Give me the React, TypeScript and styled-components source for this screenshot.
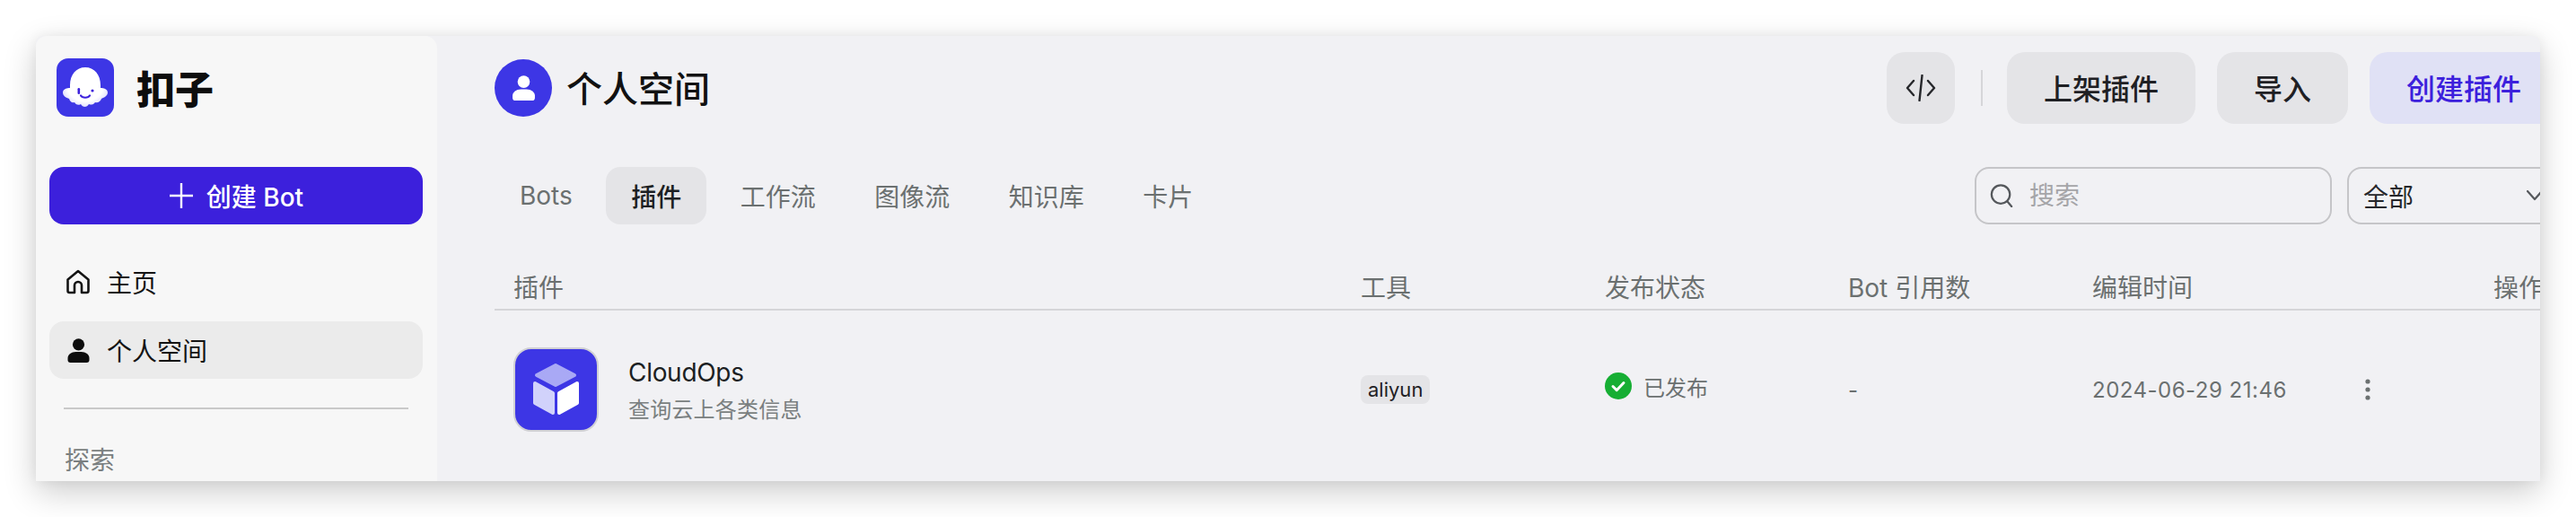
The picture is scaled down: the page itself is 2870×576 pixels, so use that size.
import { createGlobalStyle, styled } from "styled-components";

const GlobalStyle = createGlobalStyle`
  html, body {
    margin: 0;
    padding: 0;
    background: #fff;
  }
  body {
    font-family: Inter, "Noto Sans CJK SC", sans-serif;
    -webkit-font-smoothing: antialiased;
    overflow: hidden;
  }
`;

const Page = styled.div`
  width: 2870px;
  height: 576px;
  padding: 40px 40px 40px 40px;
  box-sizing: border-box;
  overflow: hidden;
`;

const Window = styled.div`
  display: flex;
  width: 2790px;
  height: 496px;
  overflow: hidden;
  background: #f1f1f4;
  border-radius: 8px 8px 0 0;
  box-shadow: 0 12px 36px rgba(0, 0, 0, 0.2), 0 0 14px rgba(0, 0, 0, 0.05);
`;

const Sidebar = styled.aside`
  flex: 0 0 447px;
  box-sizing: border-box;
  padding: 25px 16px 0 15px;
  background: #f7f7f7;
  border-radius: 12px 14px 0 0;
`;

const Brand = styled.div`
  display: flex;
  align-items: center;
  gap: 25px;
  padding-left: 8px;
  height: 65px;
`;

const BrandName = styled.span`
  font-family: "Noto Sans CJK SC", sans-serif;
  font-size: 43px;
  font-weight: 900;
  line-height: 1;
  color: #0d0d0d;
`;

const CreateBot = styled.button`
  display: flex;
  align-items: center;
  justify-content: center;
  gap: 14px;
  width: 416px;
  height: 64px;
  margin-top: 56px;
  padding: 0;
  border: 0;
  border-radius: 16px;
  background: #3c20dc;
  color: #fff;
  font: 500 28px Inter, "Noto Sans CJK SC", sans-serif;
`;

const Nav = styled.nav`
  display: flex;
  flex-direction: column;
  gap: 12px;
  margin-top: 32px;
`;

const NavItem = styled.div<{ $active?: boolean }>`
  display: flex;
  align-items: center;
  gap: 18px;
  width: 416px;
  height: 64px;
  padding-left: 18px;
  box-sizing: border-box;
  border-radius: 16px;
  background: ${(p) => (p.$active ? "#ebebeb" : "transparent")};
  color: #141414;
  font-size: 28px;
`;

const NavIconSlot = styled.span`
  display: flex;
  justify-content: center;
  width: 28px;
`;

const SideDivider = styled.div`
  width: 384px;
  height: 2px;
  margin: 32px 0 0 16px;
  background: #c9c9c9;
`;

const SideLabel = styled.div`
  margin: 36px 0 0 17px;
  font-size: 28px;
  line-height: 42px;
  color: #7a7f80;
`;

const Main = styled.main`
  flex: 0 0 2299px;
  padding: 18px 0 0 64px;
`;

const Header = styled.header`
  display: flex;
  align-items: center;
  justify-content: space-between;
  height: 80px;
`;

const Title = styled.div`
  display: flex;
  align-items: center;
  gap: 16px;
  font-size: 40px;
  font-weight: 500;
  color: #111;
`;

const TitleText = styled.span`
  margin-bottom: 3px;
`;

const Avatar = styled.span`
  display: flex;
  align-items: center;
  justify-content: center;
  width: 64px;
  height: 64px;
  border-radius: 50%;
  background: #3d36e5;
`;

const Actions = styled.div`
  display: flex;
  align-items: center;
`;

const ActionButton = styled.button<{ $primary?: boolean }>`
  height: 80px;
  padding: 0 41px 2px;
  margin-left: 24px;
  border: 0;
  border-radius: 20px;
  background: ${(p) => (p.$primary ? "#e0e1f5" : "#e4e4e7")};
  color: ${(p) => (p.$primary ? "#3c20dc" : "#1f2024")};
  font: 500 32px "Noto Sans CJK SC", sans-serif;
  white-space: nowrap;
`;

const CodeButton = styled(ActionButton)`
  display: flex;
  align-items: center;
  justify-content: center;
  width: 76px;
  padding: 0;
  margin: 0;
`;

const ActionDivider = styled.span`
  width: 2px;
  height: 40px;
  margin-left: 29px;
  margin-right: 3px;
  background: #d6d6d9;
`;

const Toolbar = styled.div`
  display: flex;
  align-items: center;
  height: 64px;
  margin-top: 48px;
`;

const Tabs = styled.div`
  display: flex;
  gap: 9.5px;
`;

const Tab = styled.div<{ $active?: boolean }>`
  display: flex;
  align-items: center;
  height: 64px;
  padding: 0 28px;
  border-radius: 16px;
  background: ${(p) => (p.$active ? "#e4e4e7" : "transparent")};
  color: ${(p) => (p.$active ? "#1c1f23" : "#6b7070")};
  font-size: 28px;
  font-weight: ${(p) => (p.$active ? 500 : 400)};
`;

const Filters = styled.div`
  display: flex;
  gap: 17px;
  margin-left: auto;
`;

const SearchBox = styled.label`
  display: flex;
  align-items: center;
  gap: 18px;
  width: 398px;
  height: 64px;
  padding-left: 15px;
  box-sizing: border-box;
  border: 2px solid #c5c5c8;
  border-radius: 16px;
`;

const SearchInput = styled.input`
  flex: 1;
  min-width: 0;
  border: 0;
  padding: 0;
  outline: 0;
  background: transparent;
  font: 28px Inter, "Noto Sans CJK SC", sans-serif;
  &::placeholder {
    color: #a5a5a8;
    opacity: 1;
  }
`;

const Select = styled.div`
  display: flex;
  align-items: center;
  justify-content: space-between;
  width: 235px;
  height: 64px;
  padding: 0 15px 0 16px;
  box-sizing: border-box;
  border: 2px solid #c5c5c8;
  border-radius: 16px;
  color: #26272b;
  font-size: 28px;
`;

const columns = "965px 272px 271px 272px 447px 1fr";

const TableHead = styled.div`
  display: grid;
  grid-template-columns: ${columns};
  align-items: center;
  height: 96px;
  padding-top: 48px;
  box-sizing: border-box;
  border-bottom: 2px solid #d5d5d8;
  color: #6b7070;
  font-size: 28px;
  line-height: 42px;
`;

const HeadCell = styled.div<{ $first?: boolean }>`
  padding-left: ${(p) => (p.$first ? "21px" : "0")};
  white-space: nowrap;
`;

const TableRow = styled.div`
  display: grid;
  grid-template-columns: ${columns};
  align-items: center;
  padding-top: 41px;
`;

const PluginCell = styled.div`
  display: flex;
  align-items: center;
  gap: 33px;
  padding-left: 21px;
`;

const PluginIcon = styled.span`
  display: block;
  width: 95px;
  height: 94px;
  box-sizing: border-box;
  border: 2px solid #d0d0d4;
  border-radius: 20px;
  background: #3d36e5;
  overflow: hidden;
`;

const PluginText = styled.div`
  display: flex;
  flex-direction: column;
  gap: 8px;
  padding-top: 4px;
`;

const PluginName = styled.div`
  font-size: 28px;
  line-height: 34px;
  letter-spacing: -0.3px;
  color: #1c1f23;
`;

const PluginDesc = styled.div`
  font-size: 24px;
  line-height: 34px;
  letter-spacing: 0.2px;
  color: #7a7f80;
`;

const Tag = styled.span`
  justify-self: start;
  height: 32px;
  padding: 0 8px;
  border-radius: 8px;
  background: #e4e4e7;
  color: #1f2024;
  font-size: 22px;
  line-height: 32px;
`;

const Status = styled.div`
  display: flex;
  align-items: center;
  gap: 13px;
  margin-bottom: 8px;
  font-size: 24px;
  color: #6b7070;
`;

const Muted = styled.div`
  font-size: 24px;
  letter-spacing: 0.5px;
  color: #6b7070;
`;

const TimeCell = styled.div`
  display: flex;
  align-items: center;
  justify-content: space-between;
  width: 310px;
`;

const PersonIcon = ({ color, width, height }: { color: string; width: number; height: number }) => (
  <svg width={width} height={height} viewBox="0 0 24 27" fill={color}>
    <circle cx="12" cy="6.8" r="6.6" />
    <path d="M0 22c0-4 4-7 9-7h6c5 0 9 3 9 7v2a3 3 0 0 1-3 3H3a3 3 0 0 1-3-3z" />
  </svg>
);

const LogoIcon = () => (
  <svg width="64" height="65" viewBox="0 0 64 65">
    <defs>
      <radialGradient id="ghost" cx="50%" cy="45%" r="58%">
        <stop offset="70%" stopColor="#fff" />
        <stop offset="100%" stopColor="#dcdafc" />
      </radialGradient>
    </defs>
    <rect width="64" height="65" rx="13" fill="#3d36e5" />
    <path
      fill="url(#ghost)"
      d="M32 10C42 10 49 18 49 30V33C52 33 57 34 57 38C57 42 52 44 50 45C49 48 46 50 43 49C41 52 38 52 36 51C34 55 29 55 27 51C24 53 21 51 20 49C17 50 15 48 14 45C11 44 7 42 7 38C7 34 12 33 15 33V30C15 18 22 10 32 10Z"
    />
    <rect x="23.5" y="33" width="2.6" height="7" rx="1.3" fill="#3c20dc" />
    <circle cx="40" cy="36" r="1.6" fill="#3c20dc" />
    <path d="M27 41.5c2 3 8 3 10 0" fill="none" stroke="#3c20dc" strokeWidth="2.2" strokeLinecap="round" />
  </svg>
);

const App = () => {
  return (
    <Page>
      <GlobalStyle />
      <Window>
        <Sidebar>
          <Brand>
            <LogoIcon />
            <BrandName>扣子</BrandName>
          </Brand>
          <CreateBot>
            <svg width="28" height="30" viewBox="0 0 28 30" stroke="#fff" strokeWidth="2.4">
              <path d="M14 1v28M1 15h26" />
            </svg>
            创建 Bot
          </CreateBot>
          <Nav>
            <NavItem>
              <NavIconSlot>
                <svg width="28" height="28" viewBox="0 0 28 28" fill="none" stroke="#141414" strokeWidth="2.6" strokeLinejoin="round">
                  <path d="M14 2l11.5 9.5V24a2 2 0 0 1-2 2H18v-8a4 4 0 0 0-8 0v8H4.5a2 2 0 0 1-2-2V11.5z" />
                </svg>
              </NavIconSlot>
              主页
            </NavItem>
            <NavItem $active>
              <NavIconSlot>
                <PersonIcon color="#0d0d0d" width={25} height={27} />
              </NavIconSlot>
              个人空间
            </NavItem>
          </Nav>
          <SideDivider />
          <SideLabel>探索</SideLabel>
        </Sidebar>
        <Main>
          <Header>
            <Title>
              <Avatar>
                <PersonIcon color="#fff" width={25} height={28} />
              </Avatar>
              <TitleText>个人空间</TitleText>
            </Title>
            <Actions>
              <CodeButton>
                <svg width="34" height="30" viewBox="0 0 34 30" fill="none" stroke="#26272b" strokeWidth="2.4" strokeLinecap="round" strokeLinejoin="round">
                  <path d="M9 7l-7 8 7 8M25 7l7 8-7 8M18.5 1l-3 28" />
                </svg>
              </CodeButton>
              <ActionDivider />
              <ActionButton>上架插件</ActionButton>
              <ActionButton>导入</ActionButton>
              <ActionButton $primary>创建插件</ActionButton>
            </Actions>
          </Header>
          <Toolbar>
            <Tabs>
              <Tab>Bots</Tab>
              <Tab $active>插件</Tab>
              <Tab>工作流</Tab>
              <Tab>图像流</Tab>
              <Tab>知识库</Tab>
              <Tab>卡片</Tab>
            </Tabs>
            <Filters>
              <SearchBox>
                <svg width="26" height="26" viewBox="0 0 27 28" fill="none" stroke="#55585c" strokeWidth="2.4" strokeLinecap="round">
                  <circle cx="12.5" cy="12.5" r="11" />
                  <path d="M20.5 21l5 6" />
                </svg>
                <SearchInput placeholder="搜索" />
              </SearchBox>
              <Select>
                全部
                <svg width="18" height="12" viewBox="0 0 18 12" fill="none" stroke="#55585c" strokeWidth="2.2" strokeLinecap="round" strokeLinejoin="round">
                  <path d="M1 1l8 9 8-9" />
                </svg>
              </Select>
            </Filters>
          </Toolbar>
          <TableHead>
            <HeadCell $first>插件</HeadCell>
            <HeadCell>工具</HeadCell>
            <HeadCell>发布状态</HeadCell>
            <HeadCell>Bot 引用数</HeadCell>
            <HeadCell>编辑时间</HeadCell>
            <HeadCell>操作</HeadCell>
          </TableHead>
          <TableRow>
            <PluginCell>
              <PluginIcon>
                <svg width="91" height="90" viewBox="2 2 91 90" strokeLinejoin="round" strokeWidth="4">
                  <path d="M47 20l21 11-21 11-21-11z" fill="#a9a9f5" stroke="#a9a9f5" />
                  <path d="M24 40l20 11v22L24 62z" fill="#d1d2fb" stroke="#d1d2fb" />
                  <path d="M71 40L51 51v22l20-11z" fill="#fff" stroke="#fff" />
                </svg>
              </PluginIcon>
              <PluginText>
                <PluginName>CloudOps</PluginName>
                <PluginDesc>查询云上各类信息</PluginDesc>
              </PluginText>
            </PluginCell>
            <Tag>aliyun</Tag>
            <Status>
              <svg width="30" height="30" viewBox="0 0 30 30">
                <circle cx="15" cy="15" r="15" fill="#16ae33" />
                <path d="M9 15.5l4.2 4.2L21 11.5" fill="none" stroke="#fff" strokeWidth="3" strokeLinecap="round" strokeLinejoin="round" />
              </svg>
              已发布
            </Status>
            <Muted>-</Muted>
            <TimeCell>
              <Muted>2024-06-29 21:46</Muted>
              <svg width="6" height="24" viewBox="0 0 6 24" fill="#6b7070">
                <circle cx="3" cy="3" r="2.6" />
                <circle cx="3" cy="12" r="2.6" />
                <circle cx="3" cy="21" r="2.6" />
              </svg>
            </TimeCell>
          </TableRow>
        </Main>
      </Window>
    </Page>
  );
};

export default App;
